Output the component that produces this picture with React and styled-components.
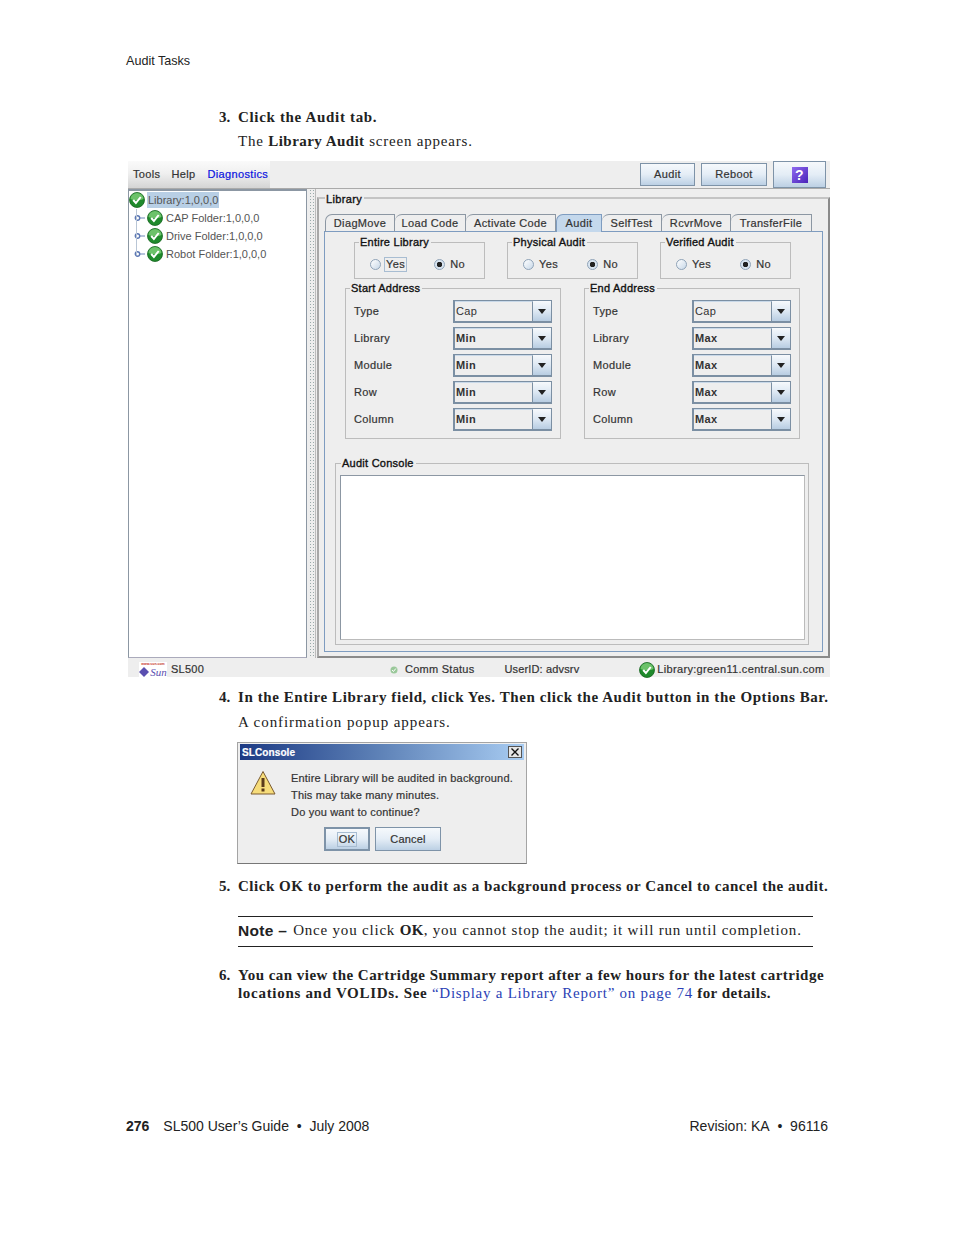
import React from "react";
import styled, { createGlobalStyle } from "styled-components";

const GlobalStyle = createGlobalStyle`
  html, body { margin: 0; padding: 0; background: #fff; }
`;

const Page = styled.div`
  width: 954px;
  height: 1235px;
  box-sizing: border-box;
  padding: 54px 126px 0;
  display: flex;
  flex-direction: column;
  font-family: "Liberation Serif", serif;
  color: #222;
  overflow: hidden;
`;

const RunningHead = styled.div`
  font: 12.6px/14px "Liberation Sans", sans-serif;
  margin-bottom: 40px;
`;

const Step = styled.div`
  display: flex;
  margin-left: 93px;
  font-size: 15px;
  line-height: 18px;
  font-weight: bold;
  white-space: nowrap;
  letter-spacing: ${(p) => p.$spacing || "0.5px"};
  margin-top: ${(p) => p.$top || 0}px;
`;

const StepNum = styled.span`
  width: 19px;
  flex: none;
  letter-spacing: 0;
`;

const StepLead = styled.span`
  letter-spacing: 0.7px;
`;

const Para = styled.div`
  margin-left: 112px;
  font-size: 15px;
  line-height: 18px;
  letter-spacing: ${(p) => p.$spacing || "0.9px"};
  white-space: nowrap;
  margin-top: ${(p) => p.$top || 0}px;
  b { letter-spacing: 0.45px; }
`;

const Link = styled.span`
  color: #2a3fb5;
  font-weight: normal;
  letter-spacing: 0.75px;
`;

const Window = styled.div`
  margin: 11px 0 0 2px;
  width: 702px;
  height: 516px;
  flex: none;
  display: flex;
  flex-direction: column;
  background: #eee;
  font: 11px/13px "Liberation Sans", sans-serif;
  color: #333;
  letter-spacing: 0.35px;
  -webkit-text-stroke: 0.2px #333;
`;

const Toolbar = styled.div`
  height: 27px;
  flex: none;
  display: flex;
  align-items: center;
  border-bottom: 1px solid #aaa;
  padding-right: 4px;
  gap: 6px;
`;

const MenuBar = styled.div`
  width: 142px;
  height: 27px;
  box-sizing: border-box;
  padding: 0 0 0 5px;
  display: flex;
  align-items: center;
  gap: 11px;
  margin-right: auto;
  background: linear-gradient(#fafafa, #f0f0f0 45%, #d4d4d4);
`;

const MenuItem = styled.span`
  color: ${(p) => (p.$active ? "#0a12e0" : "#333")};
  -webkit-text-stroke-color: ${(p) => (p.$active ? "#0a12e0" : "#333")};
  margin-left: ${(p) => p.$gap || 0}px;
`;

const Button = styled.div`
  box-sizing: border-box;
  width: ${(p) => p.$w}px;
  height: ${(p) => p.$h || 23}px;
  display: flex;
  align-items: center;
  justify-content: center;
  border: ${(p) => (p.$strong ? 2 : 1)}px solid #7e93a8;
  background: linear-gradient(#f6f9fc, #e4edf6 50%, #bcd0e4);
`;

const HelpIcon = styled.span`
  width: 16px;
  height: 16px;
  display: flex;
  align-items: center;
  justify-content: center;
  background: linear-gradient(135deg, #8e6bf0, #4a22b8);
  color: #fff;
  -webkit-text-stroke: 0;
  font: bold 14px/16px "Liberation Sans", sans-serif;
`;

const Body = styled.div`
  flex: 1;
  display: flex;
  min-height: 0;
`;

const TreePane = styled.div`
  width: 179px;
  box-sizing: border-box;
  flex: none;
  background: #fff;
  border: 1px solid #8c97a3;
  border-top-width: 2px;
  border-bottom: 1px solid #aab;
  position: relative;
`;

const TreeLine = styled.span`
  position: absolute;
  left: 7px;
  top: 18px;
  height: 46px;
  border-left: 1px solid #b9c6d6;
`;

const TreeRow = styled.div`
  height: 18px;
  display: flex;
  align-items: center;
  gap: 2px;
  padding-left: ${(p) => (p.$child ? 5 : 0)}px;
  color: #555;
  letter-spacing: 0;
  -webkit-text-stroke: 0;
`;

const TreeLabel = styled.span`
  background: ${(p) => (p.$selected ? "#b8cfe5" : "transparent")};
  height: 16px;
  line-height: 16px;
  padding: 0 1px;
`;

const Splitter = styled.div`
  width: 7px;
  flex: none;
  margin: 0 1px;
  background-image: radial-gradient(#9aa 0.6px, transparent 0.8px);
  background-size: 3px 3px;
  background-position: 1px 0;
  border-right: 1px solid #bbb;
`;

const DetailPane = styled.div`
  flex: 1;
  min-width: 0;
  box-sizing: border-box;
  margin-top: 8px;
  border: 2px solid #8a8a8a;
  border-left-color: #a8a8a8;
  border-top-color: #c4c4c4;
  padding: 0 5px 4px 5px;
  display: flex;
  flex-direction: column;
`;

const PaneTitle = styled.div`
  height: 14px;
  margin: -6px 0 7px 0;
  line-height: 12px;
  color: #111;
  -webkit-text-stroke: 0.35px #111;
  & > span { background: #eee; padding: 0 2px 0 1px; margin-left: 1px; }
`;

const Tabs = styled.div`
  display: flex;
  height: 18px;
  margin-bottom: -1px;
  padding-left: 1px;
  flex: none;
  position: relative;
  z-index: 1;
`;

const Tab = styled.div`
  box-sizing: border-box;
  width: ${(p) => p.$w}px;
  height: 18px;
  display: flex;
  align-items: center;
  justify-content: center;
  background: ${(p) => (p.$active ? "#c4d8ec" : "#eee")};
  border: 1px solid ${(p) => (p.$active ? "#7e9cc0" : "#8c97a3")};
  border-bottom: ${(p) => (p.$active ? "none" : "1px solid #7e9cc0")};
  border-left-width: ${(p) => (p.$first || p.$active ? 1 : 0)}px;
  border-top-left-radius: 7px;
`;

const TabBody = styled.div`
  flex: 1;
  min-height: 0;
  box-sizing: border-box;
  border: 1px solid #7e9cc0;
  padding: 4px 14px 4px 10px;
  display: flex;
  flex-direction: column;
`;

const Group = styled.fieldset`
  box-sizing: border-box;
  margin: 0;
  min-width: 0;
  padding: 0;
  border: 1px solid #bcbcbc;
  color: #333;
  width: ${(p) => p.$w}px;
  height: ${(p) => p.$h}px;
`;

const Legend = styled.legend`
  padding: 0 2px 0 1px;
  margin-left: 4px;
  font-size: 11px;
  line-height: 12px;
  letter-spacing: 0.25px;
  color: #111;
  -webkit-text-stroke: 0.35px #111;
`;

const ConsoleLegend = styled(Legend)`
  margin-left: 1px;
`;

const RadioRow = styled.div`
  display: flex;
  justify-content: space-between;
  padding: 0 18px 0 15px;
  margin-top: 8px;
  height: 16px;
  align-items: center;
`;

const RadioWrap = styled.label`
  display: flex;
  align-items: center;
  gap: 4px;
`;

const RadioDot = styled.span`
  width: 11px;
  height: 11px;
  box-sizing: border-box;
  border-radius: 50%;
  border: 1px solid #8fa3b8;
  background: ${(p) => (p.$on ? "radial-gradient(#222 0 2.5px, #d8e4f0 3px)" : "linear-gradient(135deg, #fff, #c8d8e8)")};
`;

const RadioText = styled.span`
  padding: 0 1px;
  outline: ${(p) => (p.$focus ? "1px solid #a8bdd2" : "none")};
`;

const OptionRow = styled.div`
  display: flex;
  gap: 22px;
  margin-left: 19px;
`;

const AddressRow = styled.div`
  display: flex;
  gap: 23px;
  margin: 3px 0 0 10px;
`;

const FieldRow = styled.div`
  display: flex;
  align-items: center;
  justify-content: space-between;
  height: 23px;
  margin-bottom: 4px;
  padding: 0 8px;
  &:first-of-type { margin-top: 6px; }
`;

const Combo = styled.div`
  box-sizing: border-box;
  width: 99px;
  height: 23px;
  display: flex;
  border: 1px solid #7b8fa3;
  border-left-width: 2px;
  border-bottom-width: 2px;
  background: #eee;
`;

const ComboValue = styled.div`
  flex: 1;
  display: flex;
  align-items: center;
  padding-left: 1px;
  border-right: 1px solid #7b8fa3;
  border-top: 1px solid #c8d8e8;
  font-weight: ${(p) => (p.$bold ? "bold" : "normal")};
  -webkit-text-stroke: 0;
`;

const ComboArrow = styled.div`
  width: 18px;
  flex: none;
  display: flex;
  align-items: center;
  justify-content: center;
  background: linear-gradient(#f6f9fc, #dde8f3 50%, #b8cde2);
  &::after {
    content: "";
    border-left: 4.5px solid transparent;
    border-right: 4.5px solid transparent;
    border-top: 5px solid #222;
  }
`;

const ConsoleGroup = styled(Group)`
  margin: 18px 0 0 0;
  padding: 0 3px 0 4px;
`;

const ConsoleText = styled.div`
  box-sizing: border-box;
  height: 165px;
  margin-top: 6px;
  background: #fff;
  border: 1px solid #8c97a3;
  border-right-color: #bbb;
  border-bottom-color: #bbb;
`;

const StatusBar = styled.div`
  height: 19px;
  box-sizing: border-box;
  padding-top: 4px;
  flex: none;
  display: flex;
  align-items: center;
  letter-spacing: 0.25px;
`;

const SunLogo = styled.div`
  width: 28px;
  height: 15px;
  margin-left: 11px;
  background: #fff;
  display: flex;
  flex-direction: column;
  align-items: center;
  overflow: hidden;
  -webkit-text-stroke: 0;
`;

const SunUrl = styled.span`
  font: bold 3.5px/5px "Liberation Sans", sans-serif;
  color: #c8342c;
  letter-spacing: 0;
  white-space: nowrap;
`;

const SunMark = styled.span`
  display: flex;
  align-items: center;
  gap: 1px;
  font: italic 11px/10px "Liberation Serif", serif;
  color: #5a4fb0;
  letter-spacing: 0;
`;

const StatusText = styled.span`
  display: flex;
  align-items: center;
  gap: 2px;
  margin-left: ${(p) => p.$left || 0}px;
  letter-spacing: ${(p) => p.$spacing || "inherit"};
  white-space: nowrap;
`;

const StatusDot = styled.svg`
  margin-left: 186px;
`;

const DialogBox = styled.div`
  margin: 11px 0 0 111px;
  width: 290px;
  height: 122px;
  flex: none;
  box-sizing: border-box;
  border: 1px solid #a4a4a4;
  border-bottom-color: #777;
  padding: 1px 2px;
  background: #eee;
  display: flex;
  flex-direction: column;
  font: 11px/13px "Liberation Sans", sans-serif;
  color: #333;
  letter-spacing: 0.19px;
  -webkit-text-stroke: 0.2px #333;
`;

const TitleBar = styled.div`
  height: 16px;
  flex: none;
  display: flex;
  align-items: center;
  justify-content: space-between;
  padding: 0 2px;
  background: linear-gradient(90deg, #1c3a84, #5f83b8 50%, #a8ccf2);
  color: #fff;
  font-weight: bold;
  font-size: 10px;
  letter-spacing: 0.1px;
  -webkit-text-stroke: 0.2px #fff;
`;

const CloseBox = styled.span`
  width: 14px;
  height: 12px;
  box-sizing: border-box;
  display: flex;
  align-items: center;
  justify-content: center;
  background: #e6e6e6;
  border: 1px solid #555;
`;

const DialogMain = styled.div`
  display: flex;
  padding: 12px 0 0 10px;
  gap: 15px;
`;

const DialogIcon = styled.svg`
  flex: none;
  margin-top: -2px;
`;

const DialogLines = styled.div`
  display: flex;
  flex-direction: column;
  gap: 4px;
  white-space: nowrap;
`;

const DialogActions = styled.div`
  display: flex;
  gap: 5px;
  margin: 8px 0 0 84px;
`;

const FocusText = styled.span`
  padding: 0 1px;
  outline: 1px solid #a8bdd2;
`;

const NoteBlock = styled.div`
  margin: 21px 15px 0 112px;
  box-sizing: border-box;
  border-top: 1px solid #222;
  border-bottom: 1px solid #222;
  height: 31px;
  padding-bottom: 2px;
  flex: none;
  display: flex;
  align-items: center;
  font-size: 15px;
  letter-spacing: 0.8px;
  white-space: nowrap;
  b { letter-spacing: 0.3px; }
`;

const NoteLabel = styled.span`
  font: bold 15.5px "Liberation Sans", sans-serif;
  letter-spacing: 0.3px;
  margin-right: 6px;
`;

const Footer = styled.div`
  margin-top: auto;
  margin-bottom: 101px;
  display: flex;
  justify-content: space-between;
  font: 14px/16px "Liberation Sans", sans-serif;
`;

const FooterLeft = styled.div`
  display: flex;
  gap: 14px;
`;

function Check({ size = 16 }) {
  return (
    <svg width={size} height={size} viewBox="0 0 16 16" style={{ flex: "none" }}>
      <circle cx="8" cy="8" r="7.5" fill="#1f8a2c" stroke="#17641f" strokeWidth="0.8" />
      <path d="M1.5 7a6.5 6 0 0 1 13 0c-3 1.8-10 1.8-13 0z" fill="#6cc26a" />
      <path d="M4.2 8l2.7 3 4.8-6" fill="none" stroke="#fff" strokeWidth="2" />
    </svg>
  );
}

function TreeHandle() {
  return (
    <svg width="11" height="8" viewBox="0 0 11 8" style={{ flex: "none" }}>
      <path d="M6 4h5" stroke="#6f88b8" strokeWidth="1" />
      <circle cx="3.5" cy="4" r="2.2" fill="#fff" stroke="#5d78b4" strokeWidth="1.4" />
    </svg>
  );
}

function WarningIcon() {
  return (
    <DialogIcon width="26" height="26" viewBox="0 0 26 26">
      <path d="M13 1.5L25 24H1z" fill="#f6dc7a" stroke="#7a5a30" strokeWidth="1" />
      <path d="M13 8v9" stroke="#5a3a1a" strokeWidth="3" />
      <rect x="11.5" y="18.5" width="3" height="3" fill="#5a3a1a" />
    </DialogIcon>
  );
}

function Radio({ label, on, focus }) {
  return (
    <RadioWrap>
      <RadioDot $on={on} />
      <RadioText $focus={focus}>{label}</RadioText>
    </RadioWrap>
  );
}

function OptionGroup({ title, focus }) {
  return (
    <Group $w={131} $h={43}>
      <Legend>{title}</Legend>
      <RadioRow>
        <Radio label="Yes" focus={focus} />
        <Radio label="No" on />
      </RadioRow>
    </Group>
  );
}

function AddressGroup({ title, value }) {
  const rows = [
    ["Type", "Cap"],
    ["Library", value],
    ["Module", value],
    ["Row", value],
    ["Column", value],
  ];
  return (
    <Group $w={216} $h={157}>
      <Legend>{title}</Legend>
      {rows.map(([name, val]) => (
        <FieldRow key={name}>
          <span>{name}</span>
          <Combo>
            <ComboValue $bold={val !== "Cap"}>{val}</ComboValue>
            <ComboArrow />
          </Combo>
        </FieldRow>
      ))}
    </Group>
  );
}

const tabs = [
  ["DiagMove", 70],
  ["Load Code", 71],
  ["Activate Code", 90],
  ["Audit", 46],
  ["SelfTest", 60],
  ["RcvrMove", 69],
  ["TransferFile", 81],
];

export default function App() {
  return (
    <Page>
      <GlobalStyle />
      <RunningHead>Audit Tasks</RunningHead>

      <Step $spacing="0.67px"><StepNum>3.</StepNum>Click the Audit tab.</Step>
      <Para $top={6} $spacing="0.8px">The <b>Library Audit</b> screen appears.</Para>

      <Window>
        <Toolbar>
          <MenuBar>
            <MenuItem>Tools</MenuItem>
            <MenuItem>Help</MenuItem>
            <MenuItem $active $gap={1}>Diagnostics</MenuItem>
          </MenuBar>
          <Button $w={55}>Audit</Button>
          <Button $w={66}>Reboot</Button>
          <Button $w={53} $h={27}><HelpIcon>?</HelpIcon></Button>
        </Toolbar>
        <Body>
          <TreePane>
            <TreeLine />
            <TreeRow><Check /><TreeLabel $selected>Library:1,0,0,0</TreeLabel></TreeRow>
            <TreeRow $child><TreeHandle /><Check /><TreeLabel>CAP Folder:1,0,0,0</TreeLabel></TreeRow>
            <TreeRow $child><TreeHandle /><Check /><TreeLabel>Drive Folder:1,0,0,0</TreeLabel></TreeRow>
            <TreeRow $child><TreeHandle /><Check /><TreeLabel>Robot Folder:1,0,0,0</TreeLabel></TreeRow>
          </TreePane>
          <Splitter />
          <DetailPane>
            <PaneTitle><span>Library</span></PaneTitle>
            <Tabs>
              {tabs.map(([name, w], i) => (
                <Tab key={name} $w={w} $first={i === 0} $active={name === "Audit"}>{name}</Tab>
              ))}
            </Tabs>
            <TabBody>
              <OptionRow>
                <OptionGroup title="Entire Library" focus />
                <OptionGroup title="Physical Audit" />
                <OptionGroup title="Verified Audit" />
              </OptionRow>
              <AddressRow>
                <AddressGroup title="Start Address" value="Min" />
                <AddressGroup title="End Address" value="Max" />
              </AddressRow>
              <ConsoleGroup $w={474} $h={188}>
                <ConsoleLegend>Audit Console</ConsoleLegend>
                <ConsoleText />
              </ConsoleGroup>
            </TabBody>
          </DetailPane>
        </Body>
        <StatusBar>
          <SunLogo>
            <SunUrl>www.sun.com</SunUrl>
            <SunMark>
              <svg width="10" height="10" viewBox="0 0 10 10">
                <path d="M5 0l5 5-5 5-5-5z" fill="#5a4fb0" />
              </svg>
              Sun
            </SunMark>
          </SunLogo>
          <StatusText $left={4}>SL500</StatusText>
          <StatusDot width="8" height="8" viewBox="0 0 16 16">
            <circle cx="8" cy="8" r="7" fill="#9ac89a" />
            <path d="M4.2 8l2.7 3 4.8-6" fill="none" stroke="#fff" strokeWidth="2" />
          </StatusDot>
          <StatusText $left={7}>Comm Status</StatusText>
          <StatusText $left={30} $spacing="0.15px">UserID: advsrv</StatusText>
          <StatusText $left={60} $spacing="0.33px"><Check />Library:green11.central.sun.com</StatusText>
        </StatusBar>
      </Window>

      <Step $top={11} $spacing="0.58px"><StepNum>4.</StepNum>In the Entire Library field, click Yes. Then click the Audit button in the Options Bar.</Step>
      <Para $top={7} $spacing="0.93px">A confirmation popup appears.</Para>

      <DialogBox>
        <TitleBar>
          SLConsole
          <CloseBox>
            <svg width="8" height="8" viewBox="0 0 8 8">
              <path d="M0.5 0.5l7 7M7.5 0.5l-7 7" stroke="#111" strokeWidth="1.4" />
            </svg>
          </CloseBox>
        </TitleBar>
        <DialogMain>
          <WarningIcon />
          <DialogLines>
            <span>Entire Library will be audited in background.</span>
            <span>This may take many minutes.</span>
            <span>Do you want to continue?</span>
          </DialogLines>
        </DialogMain>
        <DialogActions>
          <Button $w={46} $h={24} $strong><FocusText>OK</FocusText></Button>
          <Button $w={66} $h={24}>Cancel</Button>
        </DialogActions>
      </DialogBox>

      <Step $top={13} $spacing="0.53px"><StepNum>5.</StepNum>Click OK to perform the audit as a background process or Cancel to cancel the audit.</Step>

      <NoteBlock>
        <NoteLabel>Note –</NoteLabel>
        <span>Once you click <b>OK</b>, you cannot stop the audit; it will run until completion.</span>
      </NoteBlock>

      <Step $top={19} $spacing="0.48px">
        <StepNum>6.</StepNum>
        <div>
          You can view the Cartridge Summary report after a few hours for the latest cartridge<br />
          <StepLead>locations and VOLIDs. See </StepLead><Link>“Display a Library Report” on page 74</Link> for details.
        </div>
      </Step>

      <Footer>
        <FooterLeft><b>276</b><span>SL500 User’s Guide&nbsp; •&nbsp; July 2008</span></FooterLeft>
        <span>Revision: KA&nbsp; •&nbsp; 96116</span>
      </Footer>
    </Page>
  );
}
